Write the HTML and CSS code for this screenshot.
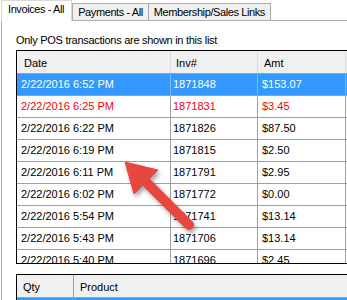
FILE: index.html
```html
<!DOCTYPE html>
<html>
<head>
<meta charset="utf-8">
<link rel="stylesheet" href="styles.css">
</head>
<body>
<div class="screen">
  <div class="tabs">
    <div class="tab active">Invoices - All</div>
    <div class="tab">Payments - All</div>
    <div class="tab">Membership/Sales Links</div>
  </div>
  <div class="panel">
    <div class="note">Only POS transactions are shown in this list</div>
    <div class="list main">
      <div class="row head"><div class="c c1">Date</div><div class="c c2">Inv#</div><div class="c c3">Amt</div><div class="c c4"></div></div>
      <div class="row sel"><div class="c c1">2/22/2016 6:52 PM</div><div class="c c2">1871848</div><div class="c c3">$153.07</div><div class="c c4"></div></div>
      <div class="row red"><div class="c c1">2/22/2016 6:25 PM</div><div class="c c2">1871831</div><div class="c c3">$3.45</div><div class="c c4"></div></div>
      <div class="row"><div class="c c1">2/22/2016 6:22 PM</div><div class="c c2">1871826</div><div class="c c3">$87.50</div><div class="c c4"></div></div>
      <div class="row"><div class="c c1">2/22/2016 6:19 PM</div><div class="c c2">1871815</div><div class="c c3">$2.50</div><div class="c c4"></div></div>
      <div class="row"><div class="c c1">2/22/2016 6:11 PM</div><div class="c c2">1871791</div><div class="c c3">$2.95</div><div class="c c4"></div></div>
      <div class="row"><div class="c c1">2/22/2016 6:02 PM</div><div class="c c2">1871772</div><div class="c c3">$0.00</div><div class="c c4"></div></div>
      <div class="row"><div class="c c1">2/22/2016 5:54 PM</div><div class="c c2">1871741</div><div class="c c3">$13.14</div><div class="c c4"></div></div>
      <div class="row"><div class="c c1">2/22/2016 5:43 PM</div><div class="c c2">1871706</div><div class="c c3">$13.14</div><div class="c c4"></div></div>
      <div class="row"><div class="c c1">2/22/2016 5:40 PM</div><div class="c c2">1871696</div><div class="c c3">$2.45</div><div class="c c4"></div></div>
    </div>
    <div class="list detail">
      <div class="row head"><div class="c q1">Qty</div><div class="c q2">Product</div></div>
      <div class="row sel"><div class="c q1"></div><div class="c q2"></div></div>
    </div>
  </div>
  <svg class="arrow" width="347" height="300" viewBox="0 0 347 300">
    <defs>
      <filter id="sh" x="-20%" y="-20%" width="150%" height="150%">
        <feDropShadow dx="2" dy="3" stdDeviation="2" flood-color="#000" flood-opacity="0.35"/>
      </filter>
    </defs>
    <g filter="url(#sh)" fill="#e8473f" stroke="#e8473f">
      <line x1="143" y1="179" x2="189" y2="225" stroke-width="10" stroke-linecap="round"/>
      <polygon points="125,162 158,170 134,194" stroke-width="1" stroke-linejoin="round"/>
    </g>
  </svg>
</div>
</body>
</html>
```
FILE: styles.css
```css
html, body {
  margin: 0;
  padding: 0;
  background: #fff;
  overflow: hidden;
}
body {
  font-family: "Liberation Sans", Arial, sans-serif;
  font-size: 11px;
  color: #000;
}
.screen {
  position: relative;
  width: 347px;
  height: 300px;
  overflow: hidden;
}
.tabs {
  display: flex;
  align-items: flex-end;
  height: 20px;
  padding-left: 1px;
}
.tab {
  box-sizing: border-box;
  height: 17px;
  line-height: 16px;
  padding: 0 5px;
  border: 1px solid #acacac;
  border-bottom: none;
  background: #f0f0f0;
  margin-left: -1px;
  white-space: nowrap;
  letter-spacing: -0.4px;
}
.tab.active {
  position: relative;
  z-index: 1;
  height: 21px;
  line-height: 17px;
  margin-left: 0;
  margin-bottom: -1px;
  margin-right: 1px;
  padding: 0 7px 0 6px;
  background: #fff;
  border-color: #d9d9d9;
}
.panel {
  margin-left: 1px;
  height: 280px;
  border-top: 1px solid #adadad;
  border-left: 1px solid #adadad;
  padding-left: 14px;
}
.note {
  padding-top: 13px;
  line-height: 13px;
  white-space: nowrap;
  letter-spacing: -0.28px;
}
.list {
  margin-top: 3px;
  width: 360px;
  border: 1px solid #000;
  overflow: hidden;
}
.main {
  height: 212px;
}
.detail {
  margin-top: 10px;
  height: 40px;
}
.row {
  display: flex;
  height: 21px;
  line-height: 21px;
  border-bottom: 1px solid #a0a0a0;
  white-space: nowrap;
}
.row.head {
  height: 22px;
  line-height: 24px;
  background: #f0f0f0;
}
.c {
  box-sizing: border-box;
  height: 100%;
  border-right: 1px solid #a0a0a0;
  overflow: hidden;
}
.c1 { width: 154px; padding-left: 4px; }
.c2 { width: 87px; padding-left: 2px; }
.c3 { width: 88px; padding-left: 4px; }
.c4 { flex: 1; border-right: none; }
.head .c { border-right-color: #dcdcdc; }
.head .c1 { padding-left: 7px; }
.head .c2 { padding-left: 5px; }
.head .c3 { padding-left: 6px; }
.row.sel {
  background: #3399ff;
  color: #fff;
}
.row.sel .c { border-right-color: #7fb8f0; }
.row.red { color: #ff0000; }
.q1 { width: 57px; padding-left: 6px; border-right-color: #a0a0a0 !important; }
.q2 { flex: 1; padding-left: 6px; border-right: none; }
.arrow {
  position: absolute;
  left: 0;
  top: 0;
  pointer-events: none;
}
```
